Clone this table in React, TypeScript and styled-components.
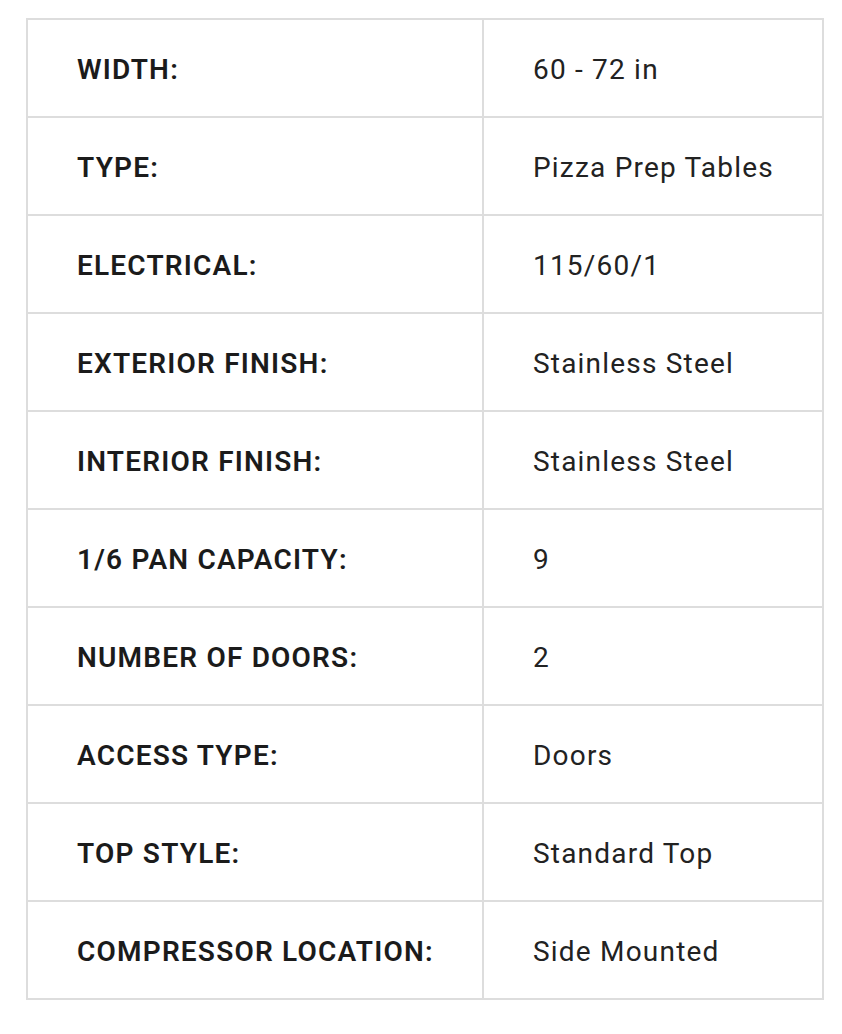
import React from "react";
import styled, { createGlobalStyle } from "styled-components";

const GlobalStyle = createGlobalStyle`
  html, body { margin: 0; padding: 0; background: #ffffff; }
  body { font-family: Roboto, "Liberation Sans", sans-serif; }
`;

const Page = styled.div`
  padding: 18px 0 0 26px;
`;

const SpecTable = styled.table`
  width: 798px;
  border-collapse: collapse;
  table-layout: fixed;
  border: 2px solid #dddddd;
`;

const Row = styled.tr`
  height: 98px;
`;

const Cell = styled.td<{ $label?: boolean }>`
  border: 2px solid #dddddd;
  padding: 3px 0 0 49px;
  width: ${(p) => (p.$label ? "405px" : "auto")};
  font-size: 28px;
  letter-spacing: 1.2px;
  line-height: 1;
  vertical-align: middle;
  font-weight: ${(p) => (p.$label ? 600 : 400)};
  color: ${(p) => (p.$label ? "#1b1b1b" : "#222222")};
  text-transform: ${(p) => (p.$label ? "uppercase" : "none")};
  white-space: nowrap;
`;

const specs: [string, string][] = [
  ["Width:", "60 - 72 in"],
  ["Type:", "Pizza Prep Tables"],
  ["Electrical:", "115/60/1"],
  ["Exterior Finish:", "Stainless Steel"],
  ["Interior Finish:", "Stainless Steel"],
  ["1/6 Pan Capacity:", "9"],
  ["Number of Doors:", "2"],
  ["Access Type:", "Doors"],
  ["Top Style:", "Standard Top"],
  ["Compressor Location:", "Side Mounted"],
];

export default function App() {
  return (
    <>
      <GlobalStyle />
      <Page>
        <SpecTable>
          <tbody>
            {specs.map(([k, v]) => (
              <Row key={k}>
                <Cell $label>{k}</Cell>
                <Cell>{v}</Cell>
              </Row>
            ))}
          </tbody>
        </SpecTable>
      </Page>
    </>
  );
}
